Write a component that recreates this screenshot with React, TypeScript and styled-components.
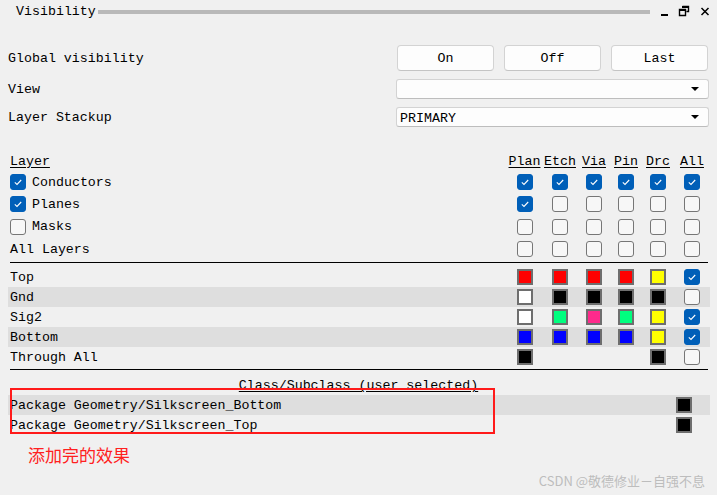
import { Fragment } from 'react';
import styled, { createGlobalStyle } from 'styled-components';

// Visibility 面板

const GlobalStyle = createGlobalStyle`
  body {
    margin: 0;
    background: #f0f0f0;
    font-family: 'Liberation Mono', 'DejaVu Sans Mono', monospace;
    font-size: 13.3px;
    color: #000;
  }
`;

const COLS = '1fr 35px 36px 32px 32px 32px 36px';

type Cell = { kind: 'check'; on: boolean } | { kind: 'swatch'; color: string } | { kind: 'none' };

const groups = [
  { name: 'Conductors', box: true, on: true, cells: [true, true, true, true, true, true] },
  { name: 'Planes', box: true, on: true, cells: [true, false, false, false, false, false] },
  { name: 'Masks', box: true, on: false, cells: [false, false, false, false, false, false] },
  { name: 'All Layers', box: false, on: false, cells: [false, false, false, false, false, false] },
];

const sw = (color: string): Cell => ({ kind: 'swatch', color });
const ck = (on: boolean): Cell => ({ kind: 'check', on });
const none: Cell = { kind: 'none' };

const layers: { name: string; cells: Cell[] }[] = [
  { name: 'Top', cells: [sw('#ff0000'), sw('#ff0000'), sw('#ff0000'), sw('#ff0000'), sw('#ffff00'), ck(true)] },
  { name: 'Gnd', cells: [sw('#ffffff'), sw('#000000'), sw('#000000'), sw('#000000'), sw('#000000'), ck(false)] },
  { name: 'Sig2', cells: [sw('#ffffff'), sw('#00ff7f'), sw('#ff2a8c'), sw('#00ff7f'), sw('#ffff00'), ck(true)] },
  { name: 'Bottom', cells: [sw('#0000ff'), sw('#0000ff'), sw('#0000ff'), sw('#0000ff'), sw('#ffff00'), ck(true)] },
  { name: 'Through All', cells: [sw('#000000'), none, none, none, sw('#000000'), ck(false)] },
];

const subclasses = ['Package Geometry/Silkscreen_Bottom', 'Package Geometry/Silkscreen_Top'];

function Check({ on }: { on: boolean }) {
  return (
    <StyledCheck $on={on}>
      {on && (
        <svg width='14' height='14' viewBox='0 0 14 14'>
          <path d='M3.8 7.4 L6 9.4 L10.2 5' fill='none' stroke='#fff' strokeWidth='1.1' />
        </svg>
      )}
    </StyledCheck>
  );
}

function renderCell(c: Cell) {
  if (c.kind === 'check') return <Check on={c.on} />;
  if (c.kind === 'swatch') return <StyledSwatch $color={c.color} />;
  return null;
}

function App() {
  return (
    <StyledPage>
      <GlobalStyle />
      <StyledTitleBar>
        <StyledTitle>Visibility</StyledTitle>
        <StyledRule />
        <StyledWinIcons>
          <svg width='8' height='14' viewBox='0 0 8 14'>
            <rect x='1' y='11' width='7' height='2' fill='#000' />
          </svg>
          <svg width='12' height='14' viewBox='0 0 12 14'>
            <path d='M4.5 3.5 H10.5 V8.5 H8.5 M1.5 6.5 H7.5 V12.5 H1.5 Z' fill='none' stroke='#000' strokeWidth='1.4' />
            <rect x='4' y='3' width='7' height='2' fill='#000' />
            <rect x='1' y='6' width='7' height='2' fill='#000' />
          </svg>
          <svg width='10' height='14' viewBox='0 0 10 14'>
            <path d='M1.5 5 L8.5 12 M8.5 5 L1.5 12' stroke='#000' strokeWidth='1.5' />
          </svg>
        </StyledWinIcons>
      </StyledTitleBar>

      <StyledForm>
        <StyledLabel>Global visibility</StyledLabel>
        <StyledButtonRow>
          <StyledButton>On</StyledButton>
          <StyledButton>Off</StyledButton>
          <StyledButton>Last</StyledButton>
        </StyledButtonRow>
        <StyledLabel>View</StyledLabel>
        <StyledSelect>
          <span />
          <StyledArrow />
        </StyledSelect>
        <StyledLabel>Layer Stackup</StyledLabel>
        <StyledSelect>
          <span>PRIMARY</span>
          <StyledArrow />
        </StyledSelect>
      </StyledForm>

      <StyledTable>
        <StyledRow $h={20}>
          <StyledHead>Layer</StyledHead>
          {['Plan', 'Etch', 'Via', 'Pin', 'Drc', 'All'].map((h) => (
            <StyledColHead key={h}>{h}</StyledColHead>
          ))}
        </StyledRow>
        {groups.map((g, i) => (
          <StyledRow key={g.name} $h={i === 2 ? 23 : 22}>
            <StyledName>
              {g.box && <Check on={g.on} />}
              {g.name}
            </StyledName>
            {g.cells.map((on, j) => (
              <StyledCell key={j}>
                <Check on={on} />
              </StyledCell>
            ))}
          </StyledRow>
        ))}
        <StyledDivider $top={2} $bottom={4} />
        {layers.map((l, i) => (
          <StyledRow key={l.name} $h={20} $striped={i % 2 === 1}>
            <StyledName>{l.name}</StyledName>
            {l.cells.map((c, j) => (
              <StyledCell key={j}>{renderCell(c)}</StyledCell>
            ))}
          </StyledRow>
        ))}
        <StyledDivider $top={2} $bottom={6} />
        <StyledClassHead>
          <span>Class/Subclass (user selected)</span>
        </StyledClassHead>
        {subclasses.map((s, i) => (
          <Fragment key={s}>
            <StyledClassRow $striped={i === 0}>
              <span>{s}</span>
              <StyledSwatch $color='#000000' />
            </StyledClassRow>
          </Fragment>
        ))}
      </StyledTable>

      <StyledNote>添加完的效果</StyledNote>
      <StyledMark />
      <StyledWatermark>CSDN @敬德修业－自强不息</StyledWatermark>
    </StyledPage>
  );
}

export default App;

const StyledPage = styled.div`
  position: relative;
  width: 717px;
  height: 495px;
  box-sizing: border-box;
  padding: 0 7px 0 8px;
  overflow: hidden;
`;

const StyledTitleBar = styled.div`
  display: flex;
  align-items: center;
  height: 24px;
`;

const StyledTitle = styled.div`
  padding-left: 8px;
  line-height: 24px;
  margin-top: -1px;
`;

const StyledRule = styled.div`
  flex: 1;
  height: 4px;
  margin: 0 10px 0 2px;
  background: #b9b9b9;
`;

const StyledWinIcons = styled.div`
  display: flex;
  align-items: center;
  gap: 10px;
  margin-top: -4px;
`;

const StyledForm = styled.div`
  display: grid;
  grid-template-columns: 388px 313px;
  grid-template-rows: 26px 20px 20px;
  row-gap: 8px;
  align-items: center;
  margin-top: 21px;
`;

const StyledLabel = styled.div`
  line-height: 20px;
  padding-top: 2px;
`;

const StyledButtonRow = styled.div`
  display: flex;
  gap: 10px;
  padding-left: 1px;
`;

const StyledButton = styled.button`
  all: unset;
  box-sizing: border-box;
  width: 97px;
  height: 26px;
  text-align: center;
  border: 1px solid #d3d3d3;
  border-bottom-color: #c4c4c4;
  border-radius: 4px;
  background: #fdfdfd;
  font-family: inherit;
  font-size: 13.3px;
  line-height: 26px;
`;

const StyledSelect = styled.div`
  box-sizing: border-box;
  height: 20px;
  display: flex;
  align-items: center;
  justify-content: space-between;
  padding: 2px 9px 0 3px;
  border: 1px solid #d3d3d3;
  border-bottom-color: #bdbdbd;
  border-radius: 3px;
  background: #fdfdfd;
`;

const StyledArrow = styled.div`
  width: 0;
  height: 0;
  margin-top: -2px;
  border-left: 4px solid transparent;
  border-right: 4px solid transparent;
  border-top: 4px solid #000;
`;

const StyledTable = styled.div`
  margin-top: 24px;
`;

const StyledRow = styled.div<{ $h: number; $striped?: boolean }>`
  display: grid;
  grid-template-columns: ${COLS};
  align-items: center;
  height: ${(p) => p.$h}px;
  background: ${(p) => (p.$striped ? '#dedede' : 'transparent')};
`;

const StyledHead = styled.div`
  padding-left: 2px;
  text-decoration: underline;
  text-underline-offset: 2px;
`;

const StyledColHead = styled.div`
  text-align: center;
  text-decoration: underline;
  text-underline-offset: 2px;
`;

const StyledName = styled.div`
  display: flex;
  align-items: center;
  gap: 6px;
  padding-left: 2px;
  white-space: nowrap;
`;

const StyledCell = styled.div`
  display: flex;
  justify-content: center;
`;

const StyledCheck = styled.div<{ $on: boolean }>`
  box-sizing: border-box;
  width: 16px;
  height: 16px;
  border-radius: 3px;
  display: flex;
  align-items: center;
  justify-content: center;
  background: ${(p) => (p.$on ? '#005fb8' : '#f7f7f7')};
  border: 1px solid ${(p) => (p.$on ? '#005fb8' : '#767676')};
`;

const StyledSwatch = styled.div<{ $color: string }>`
  box-sizing: border-box;
  width: 16px;
  height: 16px;
  border: 2px solid #6e6e6e;
  background: ${(p) => p.$color};
`;

const StyledDivider = styled.div<{ $top: number; $bottom: number }>`
  height: 1px;
  margin: ${(p) => p.$top}px 2px ${(p) => p.$bottom}px;
  background: #000;
`;

const StyledClassHead = styled.div`
  display: flex;
  justify-content: center;
  height: 19px;
  line-height: 19px;
  margin-right: -7px;
  margin-left: -8px;
  span {
    text-decoration: underline;
    text-underline-offset: 2px;
  }
`;

const StyledClassRow = styled.div<{ $striped: boolean }>`
  display: flex;
  align-items: center;
  justify-content: space-between;
  height: 20px;
  padding: 0 18px 0 2px;
  background: ${(p) => (p.$striped ? '#dedede' : 'transparent')};
`;

const StyledNote = styled.div`
  margin: 9px 0 0 20px;
  font-family: 'Noto Sans CJK SC', sans-serif;
  font-size: 17px;
  line-height: 22px;
  color: #ff2020;
`;

const StyledMark = styled.div`
  position: absolute;
  left: 10px;
  top: 388px;
  width: 485px;
  height: 46px;
  box-sizing: border-box;
  border: 2px solid #ff1a1a;
`;

const StyledWatermark = styled.div`
  position: absolute;
  right: 12px;
  bottom: 5px;
  font-family: 'Noto Sans CJK SC', sans-serif;
  font-size: 13px;
  color: #bdbdbd;
`;
